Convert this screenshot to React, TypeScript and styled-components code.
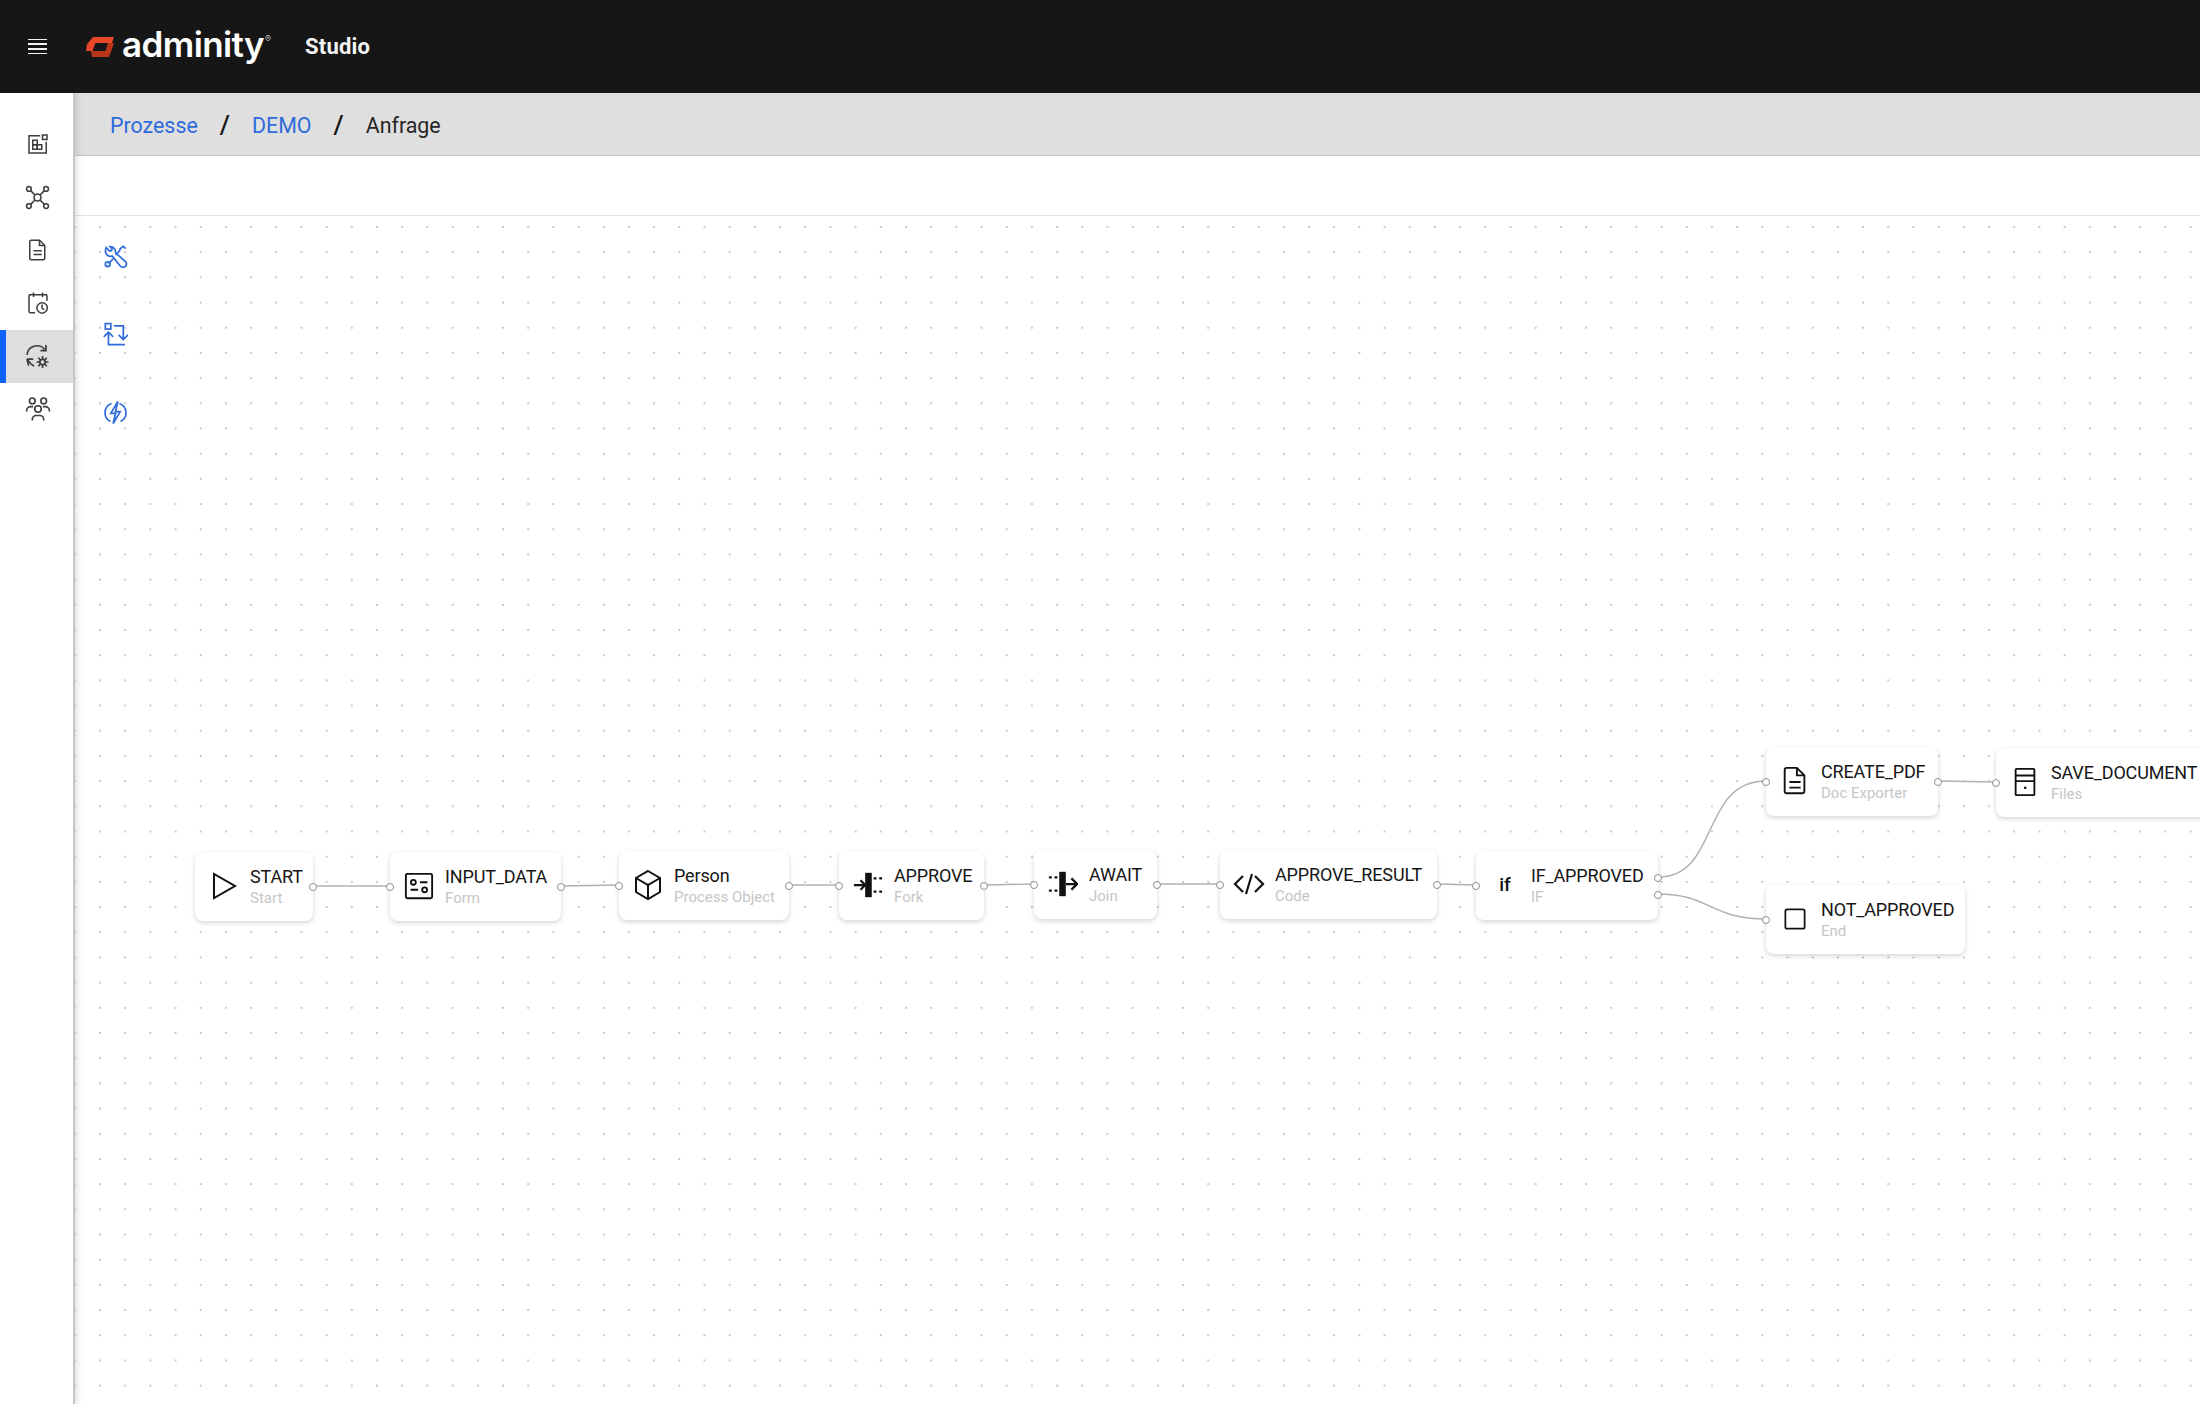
import React from 'react';
import styled, { createGlobalStyle } from 'styled-components';

const GlobalStyle = createGlobalStyle`
    html, body, #root {
        margin: 0;
        height: 100%;
    }
    body {
        font-family: "Roboto", "Noto Sans", sans-serif;
        background: #fff;
        overflow: hidden;
    }
`

const Page = styled.div`
    width: 2200px;
    height: 1404px;
    display: flex;
    flex-direction: column;
    overflow: hidden;
`

const TopBar = styled.header`
    height: 93px;
    flex: none;
    display: flex;
    align-items: center;
    background: #161616;
    color: #fff;
`

const MenuButton = styled.div`
    width: 75px;
    height: 16px;
    display: flex;
    flex-direction: column;
    justify-content: space-between;
    align-items: center;
    flex: none;
`

const MenuLine = styled.span`
    width: 19px;
    height: 1.5px;
    background: #f4f4f4;
`

const Logo = styled.div`
    display: flex;
    align-items: center;
    margin-left: 11px;
    width: 219px;
`

const LogoText = styled.span`
    font-family: "Inter", sans-serif;
    font-size: 35px;
    font-weight: 600;
    letter-spacing: -0.6px;
    line-height: 1;
    margin-left: 8px;
    margin-top: -5px;
`

const LogoMark = styled.span`
    font-family: "Inter", sans-serif;
    font-size: 9px;
    color: #bbb;
    margin-top: -16px;
    margin-left: 1px;
`

const ProductName = styled.div`
    font-size: 22px;
    font-weight: 700;
    letter-spacing: 0.2px;
    color: #f4f4f4;
`

const Body = styled.div`
    flex: 1;
    min-height: 0;
    display: flex;
`

const SideNav = styled.nav`
    width: 74px;
    flex: none;
    padding-top: 25px;
    box-sizing: border-box;
    border-right: 1px solid #c6c6c6;
    box-shadow: 1px 0 0 #c6c6c6, 4px 0 5px rgba(0, 0, 0, 0.1);
    position: relative;
    z-index: 2;
    background: #fff;
`

const NavItem = styled.div<{ $active?: boolean }>`
    height: 53px;
    display: flex;
    align-items: center;
    justify-content: center;
    color: #3d3d3d;
    box-sizing: border-box;
    padding: 0 4px 1px 0;
    background: ${props => props.$active ? '#dedede' : 'transparent'};
    border-left: 6px solid ${props => props.$active ? '#0f62fe' : 'transparent'};
`

const Main = styled.main`
    flex: 1;
    min-width: 0;
    display: flex;
    flex-direction: column;
`

const Breadcrumbs = styled.div`
    height: 63px;
    flex: none;
    box-sizing: border-box;
    display: flex;
    align-items: center;
    padding: 2px 0 0 36px;
    background: #dfdfdf;
    border-bottom: 1px solid #c6c6c6;
    font-size: 21.4px;
`

const CrumbLink = styled.a`
    color: #2f6bdc;
`

const CrumbSlash = styled.span`
    color: #161616;
    font-size: 26px;
    font-weight: 500;
    margin: 0 22px;
`

const CrumbCurrent = styled.span`
    color: #262626;
`

const Toolbar = styled.div`
    height: 60px;
    flex: none;
    box-sizing: border-box;
    background: #fff;
    border-bottom: 1px solid #e0e0e0;
`

const Canvas = styled.div`
    flex: 1;
    position: relative;
    overflow: hidden;
    background-color: #fff;
    background-image: radial-gradient(circle, #c8c8c8 0.7px, transparent 1px);
    background-size: 25.2px 25.2px;
    background-position: 13.4px -1.6px;
`

const ToolColumn = styled.div`
    position: absolute;
    left: 29px;
    top: 28px;
    display: flex;
    flex-direction: column;
    gap: 53px;
    color: #2f6bdc;
`

const EdgeLayer = styled.svg`
    position: absolute;
    left: 0;
    top: 0;
    width: 100%;
    height: 100%;
`

const Node = styled.div<{ $x: number; $y: number; $w: number }>`
    position: absolute;
    left: ${props => props.$x}px;
    top: ${props => props.$y}px;
    width: ${props => props.$w}px;
    height: 69px;
    box-sizing: border-box;
    display: flex;
    align-items: center;
    padding-left: 14px;
    background: #fff;
    border-radius: 8px;
    box-shadow: 0 2px 5px rgba(0, 0, 0, 0.17);
`

const NodeIcon = styled.div`
    width: 28px;
    height: 32px;
    flex: none;
    margin: -2px 13px 0 1px;
    display: flex;
    align-items: center;
    justify-content: center;
    color: #111;
    font-size: 19px;
    font-weight: 500;
`

const NodeText = styled.div`
    display: flex;
    flex-direction: column;
    white-space: nowrap;
    margin-left: -1px;
`

const NodeLabel = styled.div`
    font-size: 18px;
    line-height: 22px;
    letter-spacing: -0.15px;
    color: #161616;
`

const NodeType = styled.div`
    font-size: 15px;
    line-height: 20px;
    color: #c6c6c6;
`

const Handle = styled.span<{ $side: 'left' | 'right'; $dy: number }>`
    position: absolute;
    ${props => props.$side}: -4px;
    top: calc(50% + ${props => props.$dy}px - 4px);
    width: 8px;
    height: 8px;
    box-sizing: border-box;
    border: 1px solid #8f8f8f;
    border-radius: 50%;
    background: #fff;
`

const Ic = ({ size = 24, sw = 2, children }: { size?: number; sw?: number; children: React.ReactNode }) => (
    <svg width={size} height={size} viewBox="0 0 32 32" fill="none" stroke="currentColor" strokeWidth={sw} style={{ flex: 'none' }}>
        {children}
    </svg>
)

const IconDash = () => <Ic>
    <path d="M27 13v15H4V5h15" /><rect x="22" y="4" width="6" height="6" />
    <rect x="9" y="11" width="6" height="6" /><rect x="9" y="17" width="6" height="6" /><rect x="15" y="17" width="6" height="6" />
</Ic>
const IconNetwork = () => <Ic size={25}>
    <circle cx="16" cy="16" r="4.5" /><circle cx="5" cy="5" r="3" /><circle cx="27" cy="5" r="3" /><circle cx="5" cy="27" r="3" /><circle cx="27" cy="27" r="3" />
    <path d="M7.2 7.2 12.8 12.8M24.8 7.2 19.2 12.8M7.2 24.8 12.8 19.2M24.8 24.8 19.2 19.2" />
</Ic>
const IconDoc = () => <Ic>
    <path d="M7 3h11l7 7v17a2 2 0 0 1-2 2H7a2 2 0 0 1-2-2V5a2 2 0 0 1 2-2z" /><path d="M18 3v7h7M10 17h11M10 22h11" />
</Ic>
const IconSchedule = () => <Ic>
    <path d="M12 29H6a2 2 0 0 1-2-2V7a2 2 0 0 1 2-2h20a2 2 0 0 1 2 2v6M4 5h24M10 2v6M22 2v6" />
    <circle cx="21.5" cy="22.5" r="7" /><path d="M21.5 18v5l3 2" />
</Ic>
const IconAutomate = () => <Ic size={27} sw={2}>
    <path d="M3.5 14a12 12 0 0 1 21-6.5M26 2.5V9h-6.5" />
    <path d="M3.5 19l2 8M3.5 19h7.5M4 19.5c2 3 4 6 8 8" />
    <circle cx="22" cy="22.5" r="3.2" />
    <path d="M22 15.5v3.8M22 25.7v3.8M15 22.5h3.8M25.2 22.5H29M17 17.5l2.7 2.7M24.3 24.8 27 27.5M27 17.5l-2.7 2.7M19.7 24.8 17 27.5" />
</Ic>
const IconGroup = () => <Ic size={26}>
    <circle cx="9" cy="6" r="3.5" /><circle cx="23" cy="6" r="3.5" /><circle cx="16" cy="16" r="4" />
    <path d="M2 19v-1a5 5 0 0 1 5-5h3M30 19v-1a5 5 0 0 0-5-5h-3M9 30v-1a5 5 0 0 1 5-5h4a5 5 0 0 1 5 5v1" />
</Ic>

const IconTools = () => <Ic size={25} sw={2.2}>
    <path d="M4 4.5 8.5 9a3 3 0 0 0 3-3L9 3.2a7 7 0 0 1 7 8l13 11.5a4.5 4.5 0 0 1-1 6.5 5 5 0 0 1-5.5-.5L12 15.5a7 7 0 0 1-9-6z" />
    <path d="M29 6l-3-3-4 3-1 3-5 5M13 19l-6 6" />
    <circle cx="6" cy="26" r="3" />
</Ic>
const IconLoop = () => <Ic size={25} sw={2.2}>
    <rect x="3" y="2" width="7" height="7" />
    <path d="M14 5h12v17M20 16.5l6 6 6-6" />
    <path d="M7 13v16h21M1 19l6-6 6 6" />
</Ic>
const IconEvent = () => <Ic size={25} sw={2.2}>
    <path d="M11 4.5A12.5 12.5 0 0 0 9.5 27.5M21 4.5a12.5 12.5 0 0 1 1.5 23" />
    <path d="M19 2 10 17h6l-3 13 9-15h-6z" />
</Ic>

const IconPlay = () => <Ic size={32}><path d="M6 4v24l21-12z" /></Ic>
const IconForm = () => <Ic size={30}>
    <rect x="2" y="3" width="28" height="26" rx="1.5" />
    <circle cx="10" cy="12" r="2.6" /><path d="M17 12h8M7 20h8" /><circle cx="22" cy="20" r="2.6" />
</Ic>
const IconCube = () => <Ic size={32}>
    <path d="M16 2 28 9v14l-12 7-12-7V9z" /><path d="M4 9l12 7 12-7M16 16v14" />
</Ic>
const IconFork = () => <Ic size={30} sw={2.4}>
    <path d="M1 16h11M8 11l5 5-5 5" />
    <rect x="13" y="3" width="7" height="26" fill="currentColor" stroke="none" />
    <path d="M22 9h3M28 9h3M22 23h3M28 23h3" />
</Ic>
const IconJoin = () => <Ic size={30} sw={2.4}>
    <path d="M1 9h3M7 9h3M1 23h3M7 23h3" />
    <rect x="12" y="3" width="7" height="26" fill="currentColor" stroke="none" />
    <path d="M19 16h11M25 10l6 6-6 6" />
</Ic>
const IconCode = () => <Ic size={32} sw={2.2}>
    <path d="M10 8 2 16l8 8M22 8l8 8-8 8M19 6 13 26" />
</Ic>
const IconFile = () => <Ic size={30}>
    <path d="M7 2h11l8 8v17a2 2 0 0 1-2 2H7a2 2 0 0 1-2-2V4a2 2 0 0 1 2-2z" /><path d="M18 2v8h8M10 17h12M10 23h12" />
</Ic>
const IconServer = () => <Ic size={30}>
    <rect x="6" y="2" width="20" height="28" rx="1" /><path d="M6 9h20M6 15h20" /><rect x="15" y="21" width="2.4" height="2.4" fill="currentColor" stroke="none" />
</Ic>
const IconEnd = () => <Ic size={28}><rect x="5" y="5" width="22" height="22" rx="2" /></Ic>

// positions are canvas coordinates, the canvas starts at 74,216 of the page
const nodes = [
    { x: 121, y: 636, w: 118, label: 'START', type: 'Start', icon: <IconPlay /> },
    { x: 316, y: 636, w: 171, label: 'INPUT_DATA', type: 'Form', icon: <IconForm /> },
    { x: 545, y: 635, w: 170, label: 'Person', type: 'Process Object', icon: <IconCube /> },
    { x: 765, y: 635, w: 145, label: 'APPROVE', type: 'Fork', icon: <IconFork /> },
    { x: 960, y: 634, w: 123, label: 'AWAIT', type: 'Join', icon: <IconJoin /> },
    { x: 1146, y: 634, w: 217, label: 'APPROVE_RESULT', type: 'Code', icon: <IconCode /> },
    { x: 1402, y: 635, w: 182, label: 'IF_APPROVED', type: 'IF', icon: 'if', outs: [-8, 9] },
    { x: 1692, y: 531, w: 172, label: 'CREATE_PDF', type: 'Doc Exporter', icon: <IconFile /> },
    { x: 1922, y: 532, w: 240, label: 'SAVE_DOCUMENT', type: 'Files', icon: <IconServer />, noOut: true },
    { x: 1692, y: 669, w: 199, label: 'NOT_APPROVED', type: 'End', icon: <IconEnd />, noOut: true },
]

const edges = [
    'M239 670H316',
    'M487 670L545 669',
    'M715 669H765',
    'M910 669L960 668',
    'M1083 668H1146',
    'M1363 668L1402 669',
    'M1584 661C1646 661 1626 565 1692 565',
    'M1584 678C1636 678 1636 703 1692 703',
    'M1864 565L1922 566',
]

export default function App() {
    return <>
        <GlobalStyle />
        <Page>
            <TopBar>
                <MenuButton>
                    <MenuLine /><MenuLine /><MenuLine /><MenuLine />
                </MenuButton>
                <Logo>
                    <svg width="28" height="20" viewBox="0 0 28 20">
                        <path d="M7 0H28L26 6H9.5L6.5 14H0L1 7z" fill="#e8472a" />
                        <path d="M6 20H23L28 6H22L19.5 14H5z" fill="#b93519" />
                    </svg>
                    <LogoText>adminity</LogoText>
                    <LogoMark>®</LogoMark>
                </Logo>
                <ProductName>Studio</ProductName>
            </TopBar>
            <Body>
                <SideNav>
                    <NavItem><IconDash /></NavItem>
                    <NavItem><IconNetwork /></NavItem>
                    <NavItem><IconDoc /></NavItem>
                    <NavItem><IconSchedule /></NavItem>
                    <NavItem $active><IconAutomate /></NavItem>
                    <NavItem><IconGroup /></NavItem>
                </SideNav>
                <Main>
                    <Breadcrumbs>
                        <CrumbLink>Prozesse</CrumbLink>
                        <CrumbSlash>/</CrumbSlash>
                        <CrumbLink>DEMO</CrumbLink>
                        <CrumbSlash>/</CrumbSlash>
                        <CrumbCurrent>Anfrage</CrumbCurrent>
                    </Breadcrumbs>
                    <Toolbar />
                    <Canvas>
                        <ToolColumn>
                            <IconTools />
                            <IconLoop />
                            <IconEvent />
                        </ToolColumn>
                        <EdgeLayer fill="none" stroke="#b0b0b0" strokeWidth="1.4">
                            {edges.map(d => <path key={d} d={d} />)}
                        </EdgeLayer>
                        {nodes.map(n => (
                            <Node key={n.label} $x={n.x} $y={n.y} $w={n.w}>
                                <NodeIcon>{n.icon}</NodeIcon>
                                <NodeText>
                                    <NodeLabel>{n.label}</NodeLabel>
                                    <NodeType>{n.type}</NodeType>
                                </NodeText>
                                {n.label !== 'START' && <Handle $side="left" $dy={0} />}
                                {!n.noOut && (n.outs || [0]).map(dy => <Handle key={dy} $side="right" $dy={dy} />)}
                            </Node>
                        ))}
                    </Canvas>
                </Main>
            </Body>
        </Page>
    </>
}
